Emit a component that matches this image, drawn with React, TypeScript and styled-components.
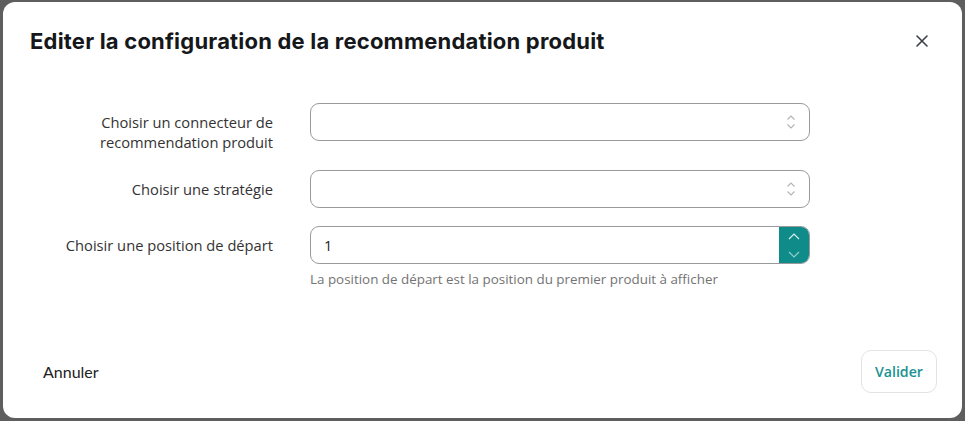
import styled, { createGlobalStyle } from 'styled-components';

const GlobalStyle = createGlobalStyle`
  html, body {
    margin: 0;
    padding: 0;
    background: #5e5e5e;
  }
  body {
    font-family: "Open Sans", "Liberation Sans", sans-serif;
  }
`;

const colors = {
  teal: '#0f8b89',
  tealText: '#1a9291',
  text: '#333333',
  muted: '#737373',
  border: '#9a9a9a',
};

export default function App() {
  return (
    <>
      <GlobalStyle />
      <Overlay>
        <Modal>
          <Header>
            <Title>Editer la configuration de la recommendation produit</Title>
            <CloseButton aria-label="Fermer">
              <svg width="12" height="12" viewBox="0 0 12 12">
                <path d="M1 1L11 11M11 1L1 11" stroke="#3a3f47" strokeWidth="1.6" strokeLinecap="round" />
              </svg>
            </CloseButton>
          </Header>

          <Form>
            <Label $tall>
              Choisir un connecteur de
              <br />
              recommendation produit
            </Label>
            <Field>
              <Select>
                <SelectArrows />
              </Select>
            </Field>

            <Label>Choisir une stratégie</Label>
            <Field>
              <Select>
                <SelectArrows />
              </Select>
            </Field>

            <Label>Choisir une position de départ</Label>
            <Field>
              <NumberInput>
                <NumberValue>1</NumberValue>
                <Spinner>
                  <SpinButton>
                    <svg width="12" height="7" viewBox="0 0 12 7">
                      <path d="M1 6L6 1L11 6" stroke="#d8eeee" strokeWidth="1.2" fill="none" />
                    </svg>
                  </SpinButton>
                  <SpinButton>
                    <svg width="12" height="7" viewBox="0 0 12 7">
                      <path d="M1 1L6 6L11 1" stroke="#8fcfcd" strokeWidth="1.2" fill="none" />
                    </svg>
                  </SpinButton>
                </Spinner>
              </NumberInput>
              <Help>La position de départ est la position du premier produit à afficher</Help>
            </Field>
          </Form>

          <Footer>
            <CancelButton>Annuler</CancelButton>
            <ValidateButton>Valider</ValidateButton>
          </Footer>
        </Modal>
      </Overlay>
    </>
  );
}

function SelectArrows() {
  return (
    <ArrowsIcon width="10" height="16" viewBox="0 0 10 16">
      <path d="M1.5 5.5L5 2L8.5 5.5M1.5 10.5L5 14L8.5 10.5" stroke="#b4b4b4" strokeWidth="1.1" fill="none" />
    </ArrowsIcon>
  );
}

const Overlay = styled.div`
  width: 965px;
  height: 421px;
  padding: 2px 3px 3px 3px;
  box-sizing: border-box;
  display: flex;
`;

const Modal = styled.div`
  flex: 1;
  background: #fff;
  border-radius: 12px;
  display: flex;
  flex-direction: column;
`;

const Header = styled.div`
  display: flex;
  align-items: center;
  justify-content: space-between;
  padding: 25px 34px 0 27px;
  height: 28px;
`;

const Title = styled.h1`
  margin: 0;
  font-family: Inter, "Open Sans", sans-serif;
  font-weight: 700;
  font-size: 22px;
  letter-spacing: 0.2px;
  color: #15171a;
`;

const CloseButton = styled.button`
  border: none;
  background: none;
  padding: 0;
  display: flex;
  cursor: pointer;
`;

const Form = styled.div`
  display: grid;
  grid-template-columns: 243px 500px;
  column-gap: 37px;
  row-gap: 18px;
  align-items: start;
  padding: 48px 0 0 27px;
`;

const Label = styled.div<{ $tall?: boolean }>`
  text-align: right;
  font-size: 14.7px;
  line-height: 20px;
  color: ${colors.text};
  min-height: 38px;
  display: flex;
  align-items: center;
  justify-content: flex-end;
  padding-top: ${(p) => (p.$tall ? '9px' : '0')};
`;

const Field = styled.div`
  display: flex;
  flex-direction: column;
  gap: 6px;
`;

const Select = styled.div`
  height: 38px;
  box-sizing: border-box;
  border: 1px solid ${colors.border};
  border-radius: 9px;
  display: flex;
  align-items: center;
  justify-content: flex-end;
  padding-right: 13px;
`;

const ArrowsIcon = styled.svg`
  display: block;
`;

const NumberInput = styled.div`
  height: 38px;
  box-sizing: border-box;
  border: 1px solid ${colors.border};
  border-radius: 9px;
  display: flex;
  align-items: stretch;
  overflow: hidden;
`;

const NumberValue = styled.div`
  flex: 1;
  display: flex;
  align-items: center;
  padding-left: 13px;
  font-size: 14.5px;
  font-weight: 500;
  color: #222;
`;

const Spinner = styled.div`
  width: 30px;
  background: ${colors.teal};
  display: flex;
  flex-direction: column;
`;

const SpinButton = styled.div`
  flex: 1;
  display: flex;
  align-items: center;
  justify-content: center;
`;

const Help = styled.div`
  font-size: 13.4px;
  color: ${colors.muted};
`;

const Footer = styled.div`
  margin-top: auto;
  display: flex;
  align-items: center;
  justify-content: space-between;
  padding: 0 25px 25px 40px;
`;

const CancelButton = styled.button`
  border: none;
  background: none;
  padding: 0;
  font-family: Lato, sans-serif;
  font-size: 16px;
  color: #222;
  cursor: pointer;
`;

const ValidateButton = styled.button`
  height: 43px;
  padding: 0 13px;
  border: 1px solid #e3e3e3;
  border-radius: 10px;
  background: #fff;
  font-family: "Open Sans", sans-serif;
  font-size: 14.2px;
  font-weight: 600;
  color: ${colors.tealText};
  cursor: pointer;
`;
